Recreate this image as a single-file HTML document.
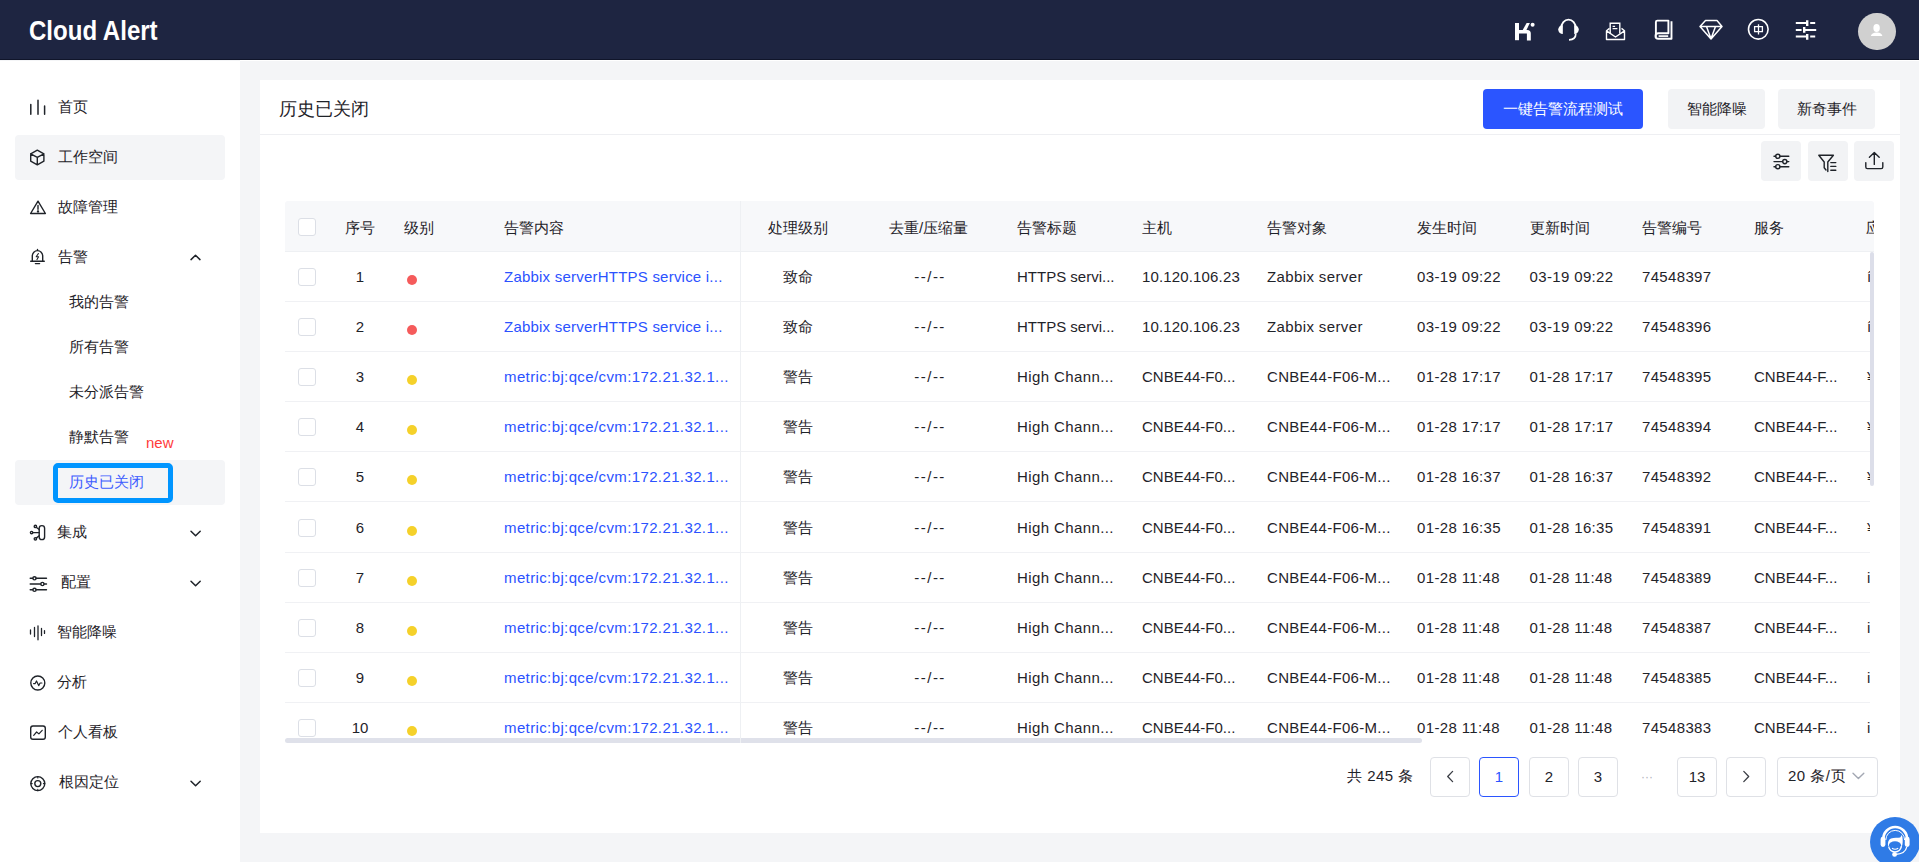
<!DOCTYPE html>
<html><head><meta charset="utf-8">
<style>
*{box-sizing:border-box;margin:0;padding:0}
html,body{width:1919px;height:862px;overflow:hidden}
body{position:relative;background:#f4f5f7;font-family:"Liberation Sans",sans-serif;color:#1f2329;font-size:15px}
.abs{position:absolute}
#hdr{left:0;top:0;width:1919px;height:60px;background:#1e2541;border-bottom:1px solid #10152a}
#logo{left:28.5px;top:16px;color:#fff;font-weight:bold;font-size:27px;line-height:30px;white-space:nowrap;transform:scaleX(0.89);transform-origin:0 0}
.hic{position:absolute;top:0;height:60px}
#side{left:0;top:61px;width:240px;height:801px;background:#fff}
.wl{left:240px;top:60px;width:1679px;height:1px;background:#fff}
.mbg{position:absolute;left:15px;width:210px;height:45px;border-radius:4px;background:#f4f5f7}
.mt{position:absolute;white-space:nowrap;line-height:20px;height:20px;font-size:15px;color:#1f2329}
.si{position:absolute;left:29px;width:18px;height:18px;overflow:visible}
.chev{position:absolute;left:189px;width:12px;height:8px;overflow:visible}
#card{left:260px;top:80px;width:1640px;height:753px;background:#fff}
</style><style>
.tt{font-size:18px;line-height:24px;color:#1f2329;white-space:nowrap}
.btn{height:40px;border-radius:4px;display:flex;align-items:center;justify-content:center;font-size:15px;white-space:nowrap}
.pri{background:#2b55ff;color:#fff}
.sec{background:#f2f3f5;color:#1f2329}
.ibtn{width:40px;height:40px;border-radius:4px;background:#f2f3f5}
.td{font-size:15px;line-height:20px;white-space:nowrap;color:#1f2329}
.td.c{text-align:center}
.lk{color:#2b52ff}
.rw{left:0;width:1585px;height:50px;border-bottom:1px solid #f0f1f4}
.cb{width:18px;height:18px;border:1px solid #dcdfe6;border-radius:3px;background:#fff}
.dot{left:122px;top:23px;width:10px;height:10px;border-radius:50%}
.dot.r{background:#f55b5b}.dot.y{background:#f5d12a}
.pt{font-size:15px;line-height:20px;white-space:nowrap;color:#1f2329}
.pg{width:40px;height:40px;border:1px solid #dfe1e6;border-radius:4px;display:flex;align-items:center;padding-bottom:2px;justify-content:center;font-size:15px;color:#1f2329;background:#fff;white-space:nowrap}
.pg.on{border-color:#2b55ff;color:#2b55ff}
.pgd{width:40px;height:40px;display:flex;align-items:center;justify-content:center;color:#b0b4bb;font-size:12px}
</style></head>
<body>
<div id="hdr" class="abs"></div>
<div id="logo" class="abs">Cloud Alert</div>
<!-- header icons -->
<svg class="abs" style="left:1500px;top:0" width="330" height="60" viewBox="1500 0 330 60" fill="none" stroke="#fff">
  <!-- K -->
  <path d="M1515 23h4v17.2h-4z" fill="#fff" stroke="none"/>
  <path d="M1519 30h8.3a3.5 3.5 0 0 1 3.5 3.5v7h-3.9v-7h-7.9z" fill="#fff" stroke="none"/>
  <path d="M1522.6 30.2L1526.6 23h3.3L1526.3 30.2z" fill="#fff" stroke="none"/>
  <circle cx="1532.6" cy="24.8" r="2" fill="#fff" stroke="none"/>
  <!-- headset -->
  <path d="M1561.2 31V28.2a7.3 8.6 0 0 1 14.6 0V31" stroke-width="1.8"/>
  <path d="M1562.8 25.2v8.8a4.6 4.4 0 0 1 0 -8.8z" fill="#fff" stroke="none"/>
  <path d="M1574.2 25.2v8.8a4.6 4.4 0 0 0 0 -8.8z" fill="#fff" stroke="none"/>
  <path d="M1575.8 33.6c0 4 -2.6 6.3 -6.8 6.3" stroke-width="1.7"/>
  <!-- envelope -->
  <path d="M1606.5 30.8v8.7h18v-8.7l-3 -2.4M1609.5 28.4l-3 2.4l9 6.2l9 -6.2" stroke-width="1.4" stroke-linejoin="round"/>
  <path d="M1610.2 33.5v-10.3h9.6v10.3" stroke-width="1.4"/>
  <path d="M1612.6 26.3h2.5M1612.6 28.6h4.8" stroke-width="1.2"/>
  <!-- book -->
  <path d="M1655.9 37.2V22.1a1.5 1.5 0 0 1 1.5 -1.5h11v12.6h-10.1a2.8 2.8 0 0 0 0 5.6h13.2V21.3" stroke-width="1.9" stroke-linejoin="round"/>
  <path d="M1658.6 36.1h9.6" stroke-width="1.7"/>
  <!-- diamond -->
  <path d="M1705.5 20.6h11.5l5 5.8l-11 12.6l-11 -12.6z M1700.5 26.4h21.5 M1706.5 26.4l4.5 12.4l4.5 -12.4" stroke-width="1.5" stroke-linejoin="round"/>
  <!-- 中 circle -->
  <circle cx="1758.3" cy="29.3" r="9.8" stroke-width="1.6"/>
  <path d="M1754.6 26.7h7.8v4.9h-7.8z M1758.5 24.2v10.2" stroke-width="1.3"/>
  <!-- sliders -->
  <path d="M1795.8 23.1h10.5 M1810.2 23.1h5 M1795.8 29.9h5.8 M1805 29.9h11.2 M1795.8 36.6h10.5 M1810.2 36.6h5" stroke-width="2"/>
  <path d="M1807.2 20.2v5.8 M1804.2 27v5.8 M1807.2 33.9v5.8" stroke-width="2.4"/>
</svg>
<!-- avatar -->
<div class="abs" style="left:1858px;top:12.5px;width:37.5px;height:37.5px;border-radius:50%;background:#d0d0d0"></div>
<svg class="abs" style="left:1866px;top:20px" width="22" height="20" viewBox="0 0 22 20">
  <ellipse cx="10.6" cy="8" rx="3.2" ry="4.1" fill="#fff"/>
  <path d="M4.8 16c0.6 -2.6 2.6 -3.4 5.8 -3.6s5.2 1 5.8 3.6z" fill="#fff"/>
</svg>

<div class="abs wl"></div>
<div id="side" class="abs"></div>
<div class="mbg" style="top:135px"></div>
<div class="mbg" style="top:460px"></div>
<div class="abs" style="left:53px;top:463px;width:120px;height:40px;border:5px solid #0095ff;border-radius:5px"></div>

<div class="mt" style="left:58px;top:97px">首页</div>
<div class="mt" style="left:58px;top:147px">工作空间</div>
<div class="mt" style="left:58px;top:197px">故障管理</div>
<div class="mt" style="left:58px;top:247px">告警</div>
<div class="mt" style="left:69px;top:292px">我的告警</div>
<div class="mt" style="left:69px;top:337px">所有告警</div>
<div class="mt" style="left:69px;top:382px">未分派告警</div>
<div class="mt" style="left:69px;top:427px">静默告警</div>
<div class="mt" style="left:146px;top:433px;color:#ff3b3b;font-size:15px">new</div>
<div class="mt" style="left:69px;top:472px;color:#3d5cff">历史已关闭</div>
<div class="mt" style="left:57px;top:522px">集成</div>
<div class="mt" style="left:61px;top:572px">配置</div>
<div class="mt" style="left:57px;top:622px">智能降噪</div>
<div class="mt" style="left:57px;top:672px">分析</div>
<div class="mt" style="left:58px;top:722px">个人看板</div>
<div class="mt" style="left:59px;top:772px">根因定位</div>

<svg class="abs" style="left:0;top:60px" width="240" height="802" viewBox="0 60 240 802" fill="none" stroke="#1f2329" stroke-width="1.4" stroke-linecap="round" stroke-linejoin="round">
  <!-- home bars -->
  <path d="M30.8 104.5v9.8 M38 100.3v14 M44.6 106v8.3" stroke-width="1.5"/>
  <!-- cube -->
  <path d="M37.3 150.2l6.6 3.6v7.4l-6.6 3.6l-6.6 -3.6v-7.4z M30.7 153.8l6.6 3.6l6.6 -3.6 M37.3 157.4v7.4"/>
  <!-- warning -->
  <path d="M38 201.2l7.4 12.3h-14.8z M38 205.5v3.8" />
  <circle cx="38" cy="211.4" r="0.5" fill="#1f2329"/>
  <!-- bell -->
  <path d="M32.3 261.2v-5.2a5.2 5.4 0 0 1 10.4 0v5.2h1.6h-13.6z M37.5 249.4v1.2 M35.4 263.6h4.2"/>
  <path d="M38.4 253.5l-2.2 3.3h2.4l-1.6 2.8" stroke-width="1.1"/>
  <!-- integration -->
  <rect x="39.2" y="525.6" width="5.4" height="14" rx="2.7"/>
  <path d="M39.2 532.6h-6.6 M39.2 529.5l-3 -2.3 M39.2 535.8l-3 2.3"/>
  <circle cx="31.6" cy="532.6" r="1.2"/><circle cx="35.4" cy="526.4" r="1.2"/><circle cx="35.4" cy="538.8" r="1.2"/>
  <!-- config sliders -->
  <path d="M36 578.3h10.5 M30.2 578.3h2.6 M30.2 584h10.5 M44 584h2.5 M36 589.8h10.5 M30.2 589.8h2.6"/>
  <circle cx="34.5" cy="578.3" r="1.6"/><circle cx="42.4" cy="584" r="1.6"/><circle cx="34.5" cy="589.8" r="1.6"/>
  <!-- wave -->
  <path d="M30.5 630v4 M34.5 627.5v9 M38 625.8v14 M41.5 628.5v7 M44.5 630.6v2.8" stroke-width="1.3"/>
  <!-- pulse -->
  <circle cx="37.8" cy="683" r="7"/>
  <path d="M33.6 683.6h1.6l1.3 -2.6l2.2 4.6l1.4 -2.6h1.8" stroke-width="1.2"/>
  <!-- board -->
  <rect x="30.7" y="726" width="14.6" height="13.2" rx="2.2"/>
  <path d="M33.7 735.3l2.9 -3.3l2.3 1.9l3.3 -3.6" stroke-width="1.2"/>
  <!-- target -->
  <circle cx="37.8" cy="783.6" r="7"/>
  <circle cx="37.8" cy="783.6" r="3"/>
  <path d="M37.8 776.6v1.4 M37.8 789.2v1.4 M30.8 783.6h1.4 M43.4 783.6h1.4" stroke-width="1.1"/>
  <!-- chevrons -->
  <path d="M191 259.6l4.5 -4.4l4.5 4.4" stroke-width="1.5"/>
  <path d="M191 531.2l4.6 4.6l4.6 -4.6" stroke-width="1.5"/>
  <path d="M191 581.2l4.6 4.6l4.6 -4.6" stroke-width="1.5"/>
  <path d="M191 781.2l4.6 4.6l4.6 -4.6" stroke-width="1.5"/>
</svg>


<div id="card" class="abs"></div>
<div class="abs tt" style="left:279px;top:97px">历史已关闭</div>
<div class="abs" style="left:260px;top:134px;width:1640px;height:1px;background:#eeeff2"></div>
<div class="abs btn pri" style="left:1483px;top:89px;width:160px">一键告警流程测试</div>
<div class="abs btn sec" style="left:1668px;top:89px;width:97px">智能降噪</div>
<div class="abs btn sec" style="left:1778px;top:89px;width:97px">新奇事件</div>
<div class="abs ibtn" style="left:1761px;top:141px"></div>
<div class="abs ibtn" style="left:1808px;top:141px"></div>
<div class="abs ibtn" style="left:1854px;top:141px"></div>
<svg class="abs" style="left:1755px;top:135px" width="150" height="50" viewBox="1755 135 150 50" fill="none" stroke="#1f2329" stroke-width="1.4" stroke-linecap="round" stroke-linejoin="round">
  <path d="M1780 156.3h8.8 M1774 156.3h1.6 M1774 161.6h8.6 M1787 161.6h1.8 M1780 166.7h8.8 M1774 166.7h1.6"/>
  <circle cx="1777.8" cy="156.3" r="2.1"/><circle cx="1784.8" cy="161.6" r="2.1"/><circle cx="1777.8" cy="166.7" r="2.1"/>
  <path d="M1818.8 155.2h14.6l-5.6 6.8v9.6 M1818.8 155.2l5.4 6.8v5.8l1.8 2.2" />
  <path d="M1830.8 162.6h5 M1830.8 166.4h5 M1830.8 170.2h5"/>
  <path d="M1865.8 162.6v4.4a1.6 1.6 0 0 0 1.6 1.6h13.8a1.6 1.6 0 0 0 1.6 -1.6v-4.4 M1874.3 164.4v-11.6 M1869.4 157.2l4.9 -4.6l4.9 4.6"/>
</svg>
<div class="abs" style="left:285px;top:201px;width:1589px;height:50px;background:#f7f8fa;border-radius:3px 3px 0 0"></div>
<div class="abs" style="left:285px;top:201px;width:1589px;height:50px;overflow:hidden">
<div class="abs td" style="left:60px;top:17px">序号</div>
<div class="abs td" style="left:119px;top:17px">级别</div>
<div class="abs td" style="left:219px;top:17px">告警内容</div>
<div class="abs td" style="left:483px;top:17px">处理级别</div>
<div class="abs td" style="left:604px;top:17px">去重/压缩量</div>
<div class="abs td" style="left:732px;top:17px">告警标题</div>
<div class="abs td" style="left:857px;top:17px">主机</div>
<div class="abs td" style="left:982px;top:17px">告警对象</div>
<div class="abs td" style="left:1132px;top:17px">发生时间</div>
<div class="abs td" style="left:1244.5px;top:17px">更新时间</div>
<div class="abs td" style="left:1357px;top:17px">告警编号</div>
<div class="abs td" style="left:1469px;top:17px">服务</div>
<div class="abs td" style="left:1581px;top:17px">应用</div>
<div class="abs cb" style="left:13px;top:17px"></div>
</div>
<div class="abs" style="left:285px;top:251px;width:1589px;height:1px;background:#eef0f3"></div>
<div class="abs" style="left:285px;top:252px;width:1585px;height:490px;overflow:hidden">
<div class="abs rw" style="top:0.0px">
<div class="abs cb" style="left:13px;top:16px"></div>
<div class="abs td c" style="left:45px;width:60px;top:15px">1</div>
<div class="abs dot r"></div>
<div class="abs td lk" style="left:219px;top:15px;letter-spacing:0.22px">Zabbix serverHTTPS service i...</div>
<div class="abs td c" style="left:472.5px;width:80px;top:15px">致命</div>
<div class="abs td c" style="left:595.05px;width:100px;top:15px;letter-spacing:1.5px">--/--</div>
<div class="abs td" style="left:732px;top:15px;letter-spacing:0px">HTTPS servi...</div>
<div class="abs td" style="left:857px;top:15px;letter-spacing:0.15px">10.120.106.23</div>
<div class="abs td" style="left:982px;top:15px;letter-spacing:0.38px">Zabbix server</div>
<div class="abs td" style="left:1132px;top:15px;letter-spacing:0.36px">03-19 09:22</div>
<div class="abs td" style="left:1244.5px;top:15px;letter-spacing:0.36px">03-19 09:22</div>
<div class="abs td" style="left:1357px;top:15px;letter-spacing:0.34px">74548397</div>
<div class="abs td" style="left:1582px;top:15px;letter-spacing:0.34px">í</div>
</div>
<div class="abs rw" style="top:50.11px">
<div class="abs cb" style="left:13px;top:16px"></div>
<div class="abs td c" style="left:45px;width:60px;top:15px">2</div>
<div class="abs dot r"></div>
<div class="abs td lk" style="left:219px;top:15px;letter-spacing:0.22px">Zabbix serverHTTPS service i...</div>
<div class="abs td c" style="left:472.5px;width:80px;top:15px">致命</div>
<div class="abs td c" style="left:595.05px;width:100px;top:15px;letter-spacing:1.5px">--/--</div>
<div class="abs td" style="left:732px;top:15px;letter-spacing:0px">HTTPS servi...</div>
<div class="abs td" style="left:857px;top:15px;letter-spacing:0.15px">10.120.106.23</div>
<div class="abs td" style="left:982px;top:15px;letter-spacing:0.38px">Zabbix server</div>
<div class="abs td" style="left:1132px;top:15px;letter-spacing:0.36px">03-19 09:22</div>
<div class="abs td" style="left:1244.5px;top:15px;letter-spacing:0.36px">03-19 09:22</div>
<div class="abs td" style="left:1357px;top:15px;letter-spacing:0.34px">74548396</div>
<div class="abs td" style="left:1582px;top:15px;letter-spacing:0.34px">í</div>
</div>
<div class="abs rw" style="top:100.22px">
<div class="abs cb" style="left:13px;top:16px"></div>
<div class="abs td c" style="left:45px;width:60px;top:15px">3</div>
<div class="abs dot y"></div>
<div class="abs td lk" style="left:219px;top:15px;letter-spacing:0.38px">metric:bj:qce/cvm:172.21.32.1...</div>
<div class="abs td c" style="left:472.5px;width:80px;top:15px">警告</div>
<div class="abs td c" style="left:595.05px;width:100px;top:15px;letter-spacing:1.5px">--/--</div>
<div class="abs td" style="left:732px;top:15px;letter-spacing:0.4px">High Chann...</div>
<div class="abs td" style="left:857px;top:15px;letter-spacing:0px">CNBE44-F0...</div>
<div class="abs td" style="left:982px;top:15px;letter-spacing:0.3px">CNBE44-F06-M...</div>
<div class="abs td" style="left:1132px;top:15px;letter-spacing:0.36px">01-28 17:17</div>
<div class="abs td" style="left:1244.5px;top:15px;letter-spacing:0.36px">01-28 17:17</div>
<div class="abs td" style="left:1357px;top:15px;letter-spacing:0.34px">74548395</div>
<div class="abs td" style="left:1469px;top:15px;letter-spacing:0px">CNBE44-F...</div>
<div class="abs td" style="left:1582px;top:15px;letter-spacing:0.34px">¥</div>
</div>
<div class="abs rw" style="top:150.33px">
<div class="abs cb" style="left:13px;top:16px"></div>
<div class="abs td c" style="left:45px;width:60px;top:15px">4</div>
<div class="abs dot y"></div>
<div class="abs td lk" style="left:219px;top:15px;letter-spacing:0.38px">metric:bj:qce/cvm:172.21.32.1...</div>
<div class="abs td c" style="left:472.5px;width:80px;top:15px">警告</div>
<div class="abs td c" style="left:595.05px;width:100px;top:15px;letter-spacing:1.5px">--/--</div>
<div class="abs td" style="left:732px;top:15px;letter-spacing:0.4px">High Chann...</div>
<div class="abs td" style="left:857px;top:15px;letter-spacing:0px">CNBE44-F0...</div>
<div class="abs td" style="left:982px;top:15px;letter-spacing:0.3px">CNBE44-F06-M...</div>
<div class="abs td" style="left:1132px;top:15px;letter-spacing:0.36px">01-28 17:17</div>
<div class="abs td" style="left:1244.5px;top:15px;letter-spacing:0.36px">01-28 17:17</div>
<div class="abs td" style="left:1357px;top:15px;letter-spacing:0.34px">74548394</div>
<div class="abs td" style="left:1469px;top:15px;letter-spacing:0px">CNBE44-F...</div>
<div class="abs td" style="left:1582px;top:15px;letter-spacing:0.34px">¥</div>
</div>
<div class="abs rw" style="top:200.44px">
<div class="abs cb" style="left:13px;top:16px"></div>
<div class="abs td c" style="left:45px;width:60px;top:15px">5</div>
<div class="abs dot y"></div>
<div class="abs td lk" style="left:219px;top:15px;letter-spacing:0.38px">metric:bj:qce/cvm:172.21.32.1...</div>
<div class="abs td c" style="left:472.5px;width:80px;top:15px">警告</div>
<div class="abs td c" style="left:595.05px;width:100px;top:15px;letter-spacing:1.5px">--/--</div>
<div class="abs td" style="left:732px;top:15px;letter-spacing:0.4px">High Chann...</div>
<div class="abs td" style="left:857px;top:15px;letter-spacing:0px">CNBE44-F0...</div>
<div class="abs td" style="left:982px;top:15px;letter-spacing:0.3px">CNBE44-F06-M...</div>
<div class="abs td" style="left:1132px;top:15px;letter-spacing:0.36px">01-28 16:37</div>
<div class="abs td" style="left:1244.5px;top:15px;letter-spacing:0.36px">01-28 16:37</div>
<div class="abs td" style="left:1357px;top:15px;letter-spacing:0.34px">74548392</div>
<div class="abs td" style="left:1469px;top:15px;letter-spacing:0px">CNBE44-F...</div>
<div class="abs td" style="left:1582px;top:15px;letter-spacing:0.34px">¥</div>
</div>
<div class="abs rw" style="top:250.55px">
<div class="abs cb" style="left:13px;top:16px"></div>
<div class="abs td c" style="left:45px;width:60px;top:15px">6</div>
<div class="abs dot y"></div>
<div class="abs td lk" style="left:219px;top:15px;letter-spacing:0.38px">metric:bj:qce/cvm:172.21.32.1...</div>
<div class="abs td c" style="left:472.5px;width:80px;top:15px">警告</div>
<div class="abs td c" style="left:595.05px;width:100px;top:15px;letter-spacing:1.5px">--/--</div>
<div class="abs td" style="left:732px;top:15px;letter-spacing:0.4px">High Chann...</div>
<div class="abs td" style="left:857px;top:15px;letter-spacing:0px">CNBE44-F0...</div>
<div class="abs td" style="left:982px;top:15px;letter-spacing:0.3px">CNBE44-F06-M...</div>
<div class="abs td" style="left:1132px;top:15px;letter-spacing:0.36px">01-28 16:35</div>
<div class="abs td" style="left:1244.5px;top:15px;letter-spacing:0.36px">01-28 16:35</div>
<div class="abs td" style="left:1357px;top:15px;letter-spacing:0.34px">74548391</div>
<div class="abs td" style="left:1469px;top:15px;letter-spacing:0px">CNBE44-F...</div>
<div class="abs td" style="left:1582px;top:15px;letter-spacing:0.34px">¥</div>
</div>
<div class="abs rw" style="top:300.66px">
<div class="abs cb" style="left:13px;top:16px"></div>
<div class="abs td c" style="left:45px;width:60px;top:15px">7</div>
<div class="abs dot y"></div>
<div class="abs td lk" style="left:219px;top:15px;letter-spacing:0.38px">metric:bj:qce/cvm:172.21.32.1...</div>
<div class="abs td c" style="left:472.5px;width:80px;top:15px">警告</div>
<div class="abs td c" style="left:595.05px;width:100px;top:15px;letter-spacing:1.5px">--/--</div>
<div class="abs td" style="left:732px;top:15px;letter-spacing:0.4px">High Chann...</div>
<div class="abs td" style="left:857px;top:15px;letter-spacing:0px">CNBE44-F0...</div>
<div class="abs td" style="left:982px;top:15px;letter-spacing:0.3px">CNBE44-F06-M...</div>
<div class="abs td" style="left:1132px;top:15px;letter-spacing:0.36px">01-28 11:48</div>
<div class="abs td" style="left:1244.5px;top:15px;letter-spacing:0.36px">01-28 11:48</div>
<div class="abs td" style="left:1357px;top:15px;letter-spacing:0.34px">74548389</div>
<div class="abs td" style="left:1469px;top:15px;letter-spacing:0px">CNBE44-F...</div>
<div class="abs td" style="left:1582px;top:15px;letter-spacing:0.34px">i</div>
</div>
<div class="abs rw" style="top:350.77px">
<div class="abs cb" style="left:13px;top:16px"></div>
<div class="abs td c" style="left:45px;width:60px;top:15px">8</div>
<div class="abs dot y"></div>
<div class="abs td lk" style="left:219px;top:15px;letter-spacing:0.38px">metric:bj:qce/cvm:172.21.32.1...</div>
<div class="abs td c" style="left:472.5px;width:80px;top:15px">警告</div>
<div class="abs td c" style="left:595.05px;width:100px;top:15px;letter-spacing:1.5px">--/--</div>
<div class="abs td" style="left:732px;top:15px;letter-spacing:0.4px">High Chann...</div>
<div class="abs td" style="left:857px;top:15px;letter-spacing:0px">CNBE44-F0...</div>
<div class="abs td" style="left:982px;top:15px;letter-spacing:0.3px">CNBE44-F06-M...</div>
<div class="abs td" style="left:1132px;top:15px;letter-spacing:0.36px">01-28 11:48</div>
<div class="abs td" style="left:1244.5px;top:15px;letter-spacing:0.36px">01-28 11:48</div>
<div class="abs td" style="left:1357px;top:15px;letter-spacing:0.34px">74548387</div>
<div class="abs td" style="left:1469px;top:15px;letter-spacing:0px">CNBE44-F...</div>
<div class="abs td" style="left:1582px;top:15px;letter-spacing:0.34px">i</div>
</div>
<div class="abs rw" style="top:400.88px">
<div class="abs cb" style="left:13px;top:16px"></div>
<div class="abs td c" style="left:45px;width:60px;top:15px">9</div>
<div class="abs dot y"></div>
<div class="abs td lk" style="left:219px;top:15px;letter-spacing:0.38px">metric:bj:qce/cvm:172.21.32.1...</div>
<div class="abs td c" style="left:472.5px;width:80px;top:15px">警告</div>
<div class="abs td c" style="left:595.05px;width:100px;top:15px;letter-spacing:1.5px">--/--</div>
<div class="abs td" style="left:732px;top:15px;letter-spacing:0.4px">High Chann...</div>
<div class="abs td" style="left:857px;top:15px;letter-spacing:0px">CNBE44-F0...</div>
<div class="abs td" style="left:982px;top:15px;letter-spacing:0.3px">CNBE44-F06-M...</div>
<div class="abs td" style="left:1132px;top:15px;letter-spacing:0.36px">01-28 11:48</div>
<div class="abs td" style="left:1244.5px;top:15px;letter-spacing:0.36px">01-28 11:48</div>
<div class="abs td" style="left:1357px;top:15px;letter-spacing:0.34px">74548385</div>
<div class="abs td" style="left:1469px;top:15px;letter-spacing:0px">CNBE44-F...</div>
<div class="abs td" style="left:1582px;top:15px;letter-spacing:0.34px">i</div>
</div>
<div class="abs rw" style="top:450.99px">
<div class="abs cb" style="left:13px;top:16px"></div>
<div class="abs td c" style="left:45px;width:60px;top:15px">10</div>
<div class="abs dot y"></div>
<div class="abs td lk" style="left:219px;top:15px;letter-spacing:0.38px">metric:bj:qce/cvm:172.21.32.1...</div>
<div class="abs td c" style="left:472.5px;width:80px;top:15px">警告</div>
<div class="abs td c" style="left:595.05px;width:100px;top:15px;letter-spacing:1.5px">--/--</div>
<div class="abs td" style="left:732px;top:15px;letter-spacing:0.4px">High Chann...</div>
<div class="abs td" style="left:857px;top:15px;letter-spacing:0px">CNBE44-F0...</div>
<div class="abs td" style="left:982px;top:15px;letter-spacing:0.3px">CNBE44-F06-M...</div>
<div class="abs td" style="left:1132px;top:15px;letter-spacing:0.36px">01-28 11:48</div>
<div class="abs td" style="left:1244.5px;top:15px;letter-spacing:0.36px">01-28 11:48</div>
<div class="abs td" style="left:1357px;top:15px;letter-spacing:0.34px">74548383</div>
<div class="abs td" style="left:1469px;top:15px;letter-spacing:0px">CNBE44-F...</div>
<div class="abs td" style="left:1582px;top:15px;letter-spacing:0.34px">i</div>
</div>
</div>
<div class="abs" style="left:285px;top:738px;width:1137px;height:4.5px;border-radius:3px;background:#dfe1ea"></div>
<div class="abs" style="left:740px;top:201px;width:1px;height:542px;background:#eef0f3"></div>
<div class="abs" style="left:1870px;top:252px;width:4px;height:234px;border-radius:2px;background:#dcdee9"></div>
<div class="abs pt" style="left:1347px;top:766px;letter-spacing:0.5px">共 245 条</div>
<div class="abs pg arr" style="left:1430px;top:757px"></div>
<div class="abs pg on" style="left:1479px;top:757px">1</div>
<div class="abs pg" style="left:1529px;top:757px">2</div>
<div class="abs pg" style="left:1578px;top:757px">3</div>
<div class="abs pg" style="left:1677px;top:757px">13</div>
<div class="abs pg arr" style="left:1726px;top:757px"></div>
<div class="abs pgd" style="left:1627px;top:757px">···</div>
<div class="abs pg" style="left:1777px;top:757px;width:101px;justify-content:flex-start;padding-left:10px;letter-spacing:0.5px">20 条/页</div>
<svg class="abs" style="left:1845px;top:768px" width="24" height="16" fill="none" stroke="#a3a8b3" stroke-width="1.4" stroke-linecap="round" stroke-linejoin="round"><path d="M8 5.2l5.4 5.4l5.4 -5.4"/></svg>
<svg class="abs" style="left:1430px;top:757px" width="340" height="40" viewBox="1430 757 340 40" fill="none" stroke="#3a3d44" stroke-width="1.3" stroke-linecap="round" stroke-linejoin="round"><path d="M1452.6 771.4l-4.9 5.1l4.9 5.1"/><path d="M1743.8 771.4l4.9 5.1l-4.9 5.1"/></svg>
<div class="abs" style="left:1870px;top:817px;width:50px;height:50px;border-radius:50%;background:#2f7be6"></div>
<svg class="abs" style="left:1870px;top:817px" width="49" height="45" viewBox="1870 817 49 45" fill="none" stroke="#fff">
 <path d="M1883.3 839a11.9 12 0 0 1 23.8 0" stroke-width="2.6"/>
 <path d="M1885.8 840a9.4 9.6 0 0 1 18.8 0" stroke-width="1"/>
 <rect x="1880.6" y="836.7" width="4.8" height="10.2" rx="2.3" fill="#fff" stroke="none"/>
 <rect x="1904.8" y="836.7" width="4.8" height="10.2" rx="2.3" fill="#fff" stroke="none"/>
 <path d="M1888 846c-0.5 -4 0.5 -6.5 3 -7.5c3 -1.2 7 -0.5 9.2 -1l1.6 -2.6c1 2.5 1.2 6 0.6 9.5l-0.8 3z" fill="#fff" stroke="none"/>
 <ellipse cx="1895" cy="845.3" rx="6.1" ry="4.1" fill="#2f7be6" stroke="none"/>
 <path d="M1892 848.2c1.8 1.2 4.4 1.2 6.2 0" stroke-width="1.1"/>
 <path d="M1888.6 846.5c0.8 3.5 3.3 5.3 6.4 5.3s5.6 -1.8 6.4 -5.3" stroke-width="1.2"/>
 <path d="M1906.7 847c-0.8 4.5 -5 7.2 -11.5 7.5" stroke-width="1.3"/>
 <circle cx="1894.6" cy="854.4" r="2.4" fill="#fff" stroke="none"/>
</svg>
</body></html>
